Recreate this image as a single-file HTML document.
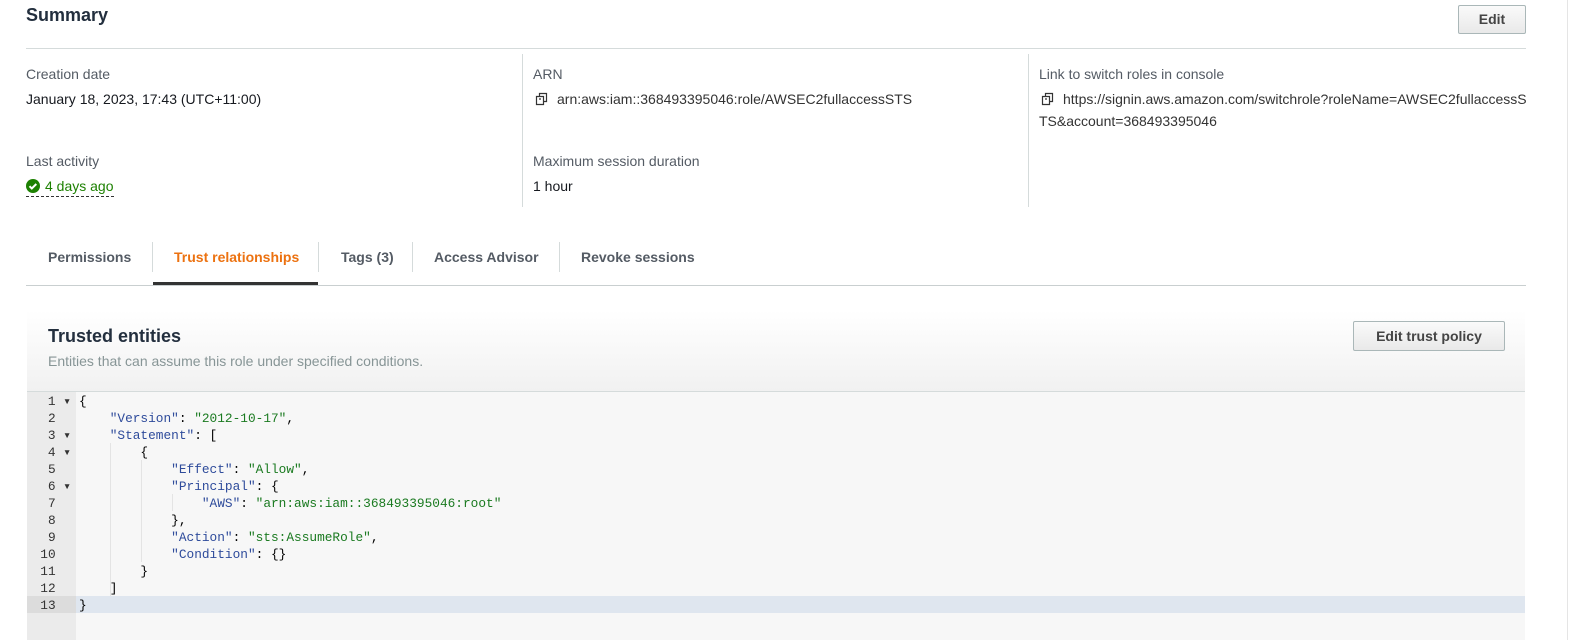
<!DOCTYPE html>
<html><head><meta charset="utf-8"><style>
*{margin:0;padding:0;box-sizing:border-box}
body{width:1571px;height:640px;background:#fff;font-family:"Liberation Sans",Arial,sans-serif;font-size:14px;color:#16191f;position:relative;overflow:hidden}
.a{position:absolute;white-space:nowrap}
.lbl{color:#545b64}
.btn{position:absolute;border:1px solid #aab7b8;border-radius:2px;background:linear-gradient(#fafafa,#e9e9e9);font-weight:bold;color:#444;text-align:center;font-size:14px}
.vl{position:absolute;width:1px;background:#d5dbdb}
.tab{position:absolute;top:249px;font-weight:bold;color:#545b64;font-size:14px}
.mono{font-family:"Liberation Mono","DejaVu Sans Mono",monospace;font-size:12.8px}
.ln{position:absolute;left:27px;width:44px;text-align:right;color:#333}
.cl{position:absolute;left:79px;white-space:pre;color:#000}
.k{color:#2e4b9b}.s{color:#1a7a20}
.ico{display:inline-block;vertical-align:-2px;margin-right:8px}
</style></head><body>
<div class="a" style="left:26px;top:5px;font-size:18px;font-weight:bold;color:#232f3e">Summary</div>
<div class="btn" style="left:1458px;top:5px;width:68px;height:29px;line-height:27px">Edit</div>
<div class="a" style="left:26px;top:48px;width:1500px;height:1px;background:#d5dbdb"></div>
<div class="vl" style="left:522px;top:54px;height:153px"></div>
<div class="vl" style="left:1028px;top:54px;height:153px"></div>
<div class="a lbl" style="left:26px;top:66px">Creation date</div>
<div class="a" style="left:26px;top:91px">January 18, 2023, 17:43 (UTC+11:00)</div>
<div class="a lbl" style="left:26px;top:153px">Last activity</div>
<div class="a" style="left:26px;top:178px;color:#1d8102;border-bottom:1px dashed #333;padding-bottom:2px"><svg width="14" height="14" viewBox="0 0 14 14" style="vertical-align:-2px;margin-right:5px"><circle cx="7" cy="7" r="7" fill="#1d8102"/><path d="M3.5 7.2l2.3 2.3 4.5-4.5" stroke="#fff" stroke-width="2" fill="none"/></svg>4 days ago</div>
<svg width="0" height="0" style="position:absolute"><defs><g id="cp"><path d="M1.5 4.5h7v8h-7z M4.5 4.5v-3h7v8h-3 M4 7h2" stroke="#333" fill="none" stroke-width="1.2"/></g></defs></svg>
<div class="a lbl" style="left:533px;top:66px">ARN</div>
<div class="a" style="left:535px;top:91px;color:#333"><svg class="ico" width="14" height="14" viewBox="0 0 14 14"><use href="#cp"/></svg>arn:aws:iam::368493395046:role/AWSEC2fullaccessSTS</div>
<div class="a lbl" style="left:533px;top:153px">Maximum session duration</div>
<div class="a" style="left:533px;top:178px">1 hour</div>
<div class="a lbl" style="left:1039px;top:66px">Link to switch roles in console</div>
<div class="a" style="left:1041px;top:91px;color:#333"><svg class="ico" width="14" height="14" viewBox="0 0 14 14"><use href="#cp"/></svg>https://signin.aws.amazon.com/switchrole?roleName=AWSEC2fullaccessS</div>
<div class="a" style="left:1039px;top:113px;color:#333">TS&amp;account=368493395046</div>

<div class="vl" style="left:152px;top:242px;height:30px"></div>
<div class="vl" style="left:318px;top:242px;height:30px"></div>
<div class="vl" style="left:412px;top:242px;height:30px"></div>
<div class="vl" style="left:559px;top:242px;height:30px"></div>
<div class="tab" style="left:48px">Permissions</div>
<div class="tab" style="left:174px;color:#ec7211">Trust relationships</div>
<div class="tab" style="left:341px">Tags (3)</div>
<div class="tab" style="left:434px">Access Advisor</div>
<div class="tab" style="left:581px">Revoke sessions</div>
<div class="a" style="left:153px;top:282px;width:165px;height:3px;background:#333"></div>
<div class="a" style="left:26px;top:285px;width:1500px;height:1px;background:#c9cfd0"></div>

<div class="a" style="left:27px;top:310px;width:1498px;height:82px;background:linear-gradient(#fff,#f1f1f1);border-bottom:1px solid #d5dbdb"></div>
<div class="a" style="left:48px;top:326px;font-size:18px;font-weight:bold;color:#232f3e">Trusted entities</div>
<div class="a" style="left:48px;top:353px;color:#879596">Entities that can assume this role under specified conditions.</div>
<div class="btn" style="left:1353px;top:321px;width:152px;height:30px;line-height:28px">Edit trust policy</div>

<div class="a" style="left:27px;top:392px;width:49px;height:248px;background:#ebebeb"></div>
<div class="a" style="left:76px;top:392px;width:1449px;height:248px;background:#f7f7f7"></div>
<div class="a" style="left:27px;top:596px;width:49px;height:17px;background:#dcdcdc"></div>
<div class="a" style="left:76px;top:596px;width:1449px;height:17px;background:#dfe6ef"></div>
<div class="a" style="left:1567px;top:0;width:1px;height:640px;background:#e5e5e5"></div>
<div class="a" style="left:110px;top:443px;width:1px;height:153px;background:#e4e4e4"></div>
<div class="a" style="left:141px;top:460px;width:1px;height:102px;background:#e4e4e4"></div>
<div class="a" style="left:172px;top:494px;width:1px;height:17px;background:#e4e4e4"></div>
<div class="mono" style="position:absolute;left:0;top:2px;width:1571px">
<div class="ln" style="top:392px">1 ▾</div><div class="cl" style="top:392px">{</div>
<div class="ln" style="top:409px">2&nbsp;&nbsp;</div><div class="cl" style="top:409px">    <span class="k">"Version"</span>: <span class="s">"2012-10-17"</span>,</div>
<div class="ln" style="top:426px">3 ▾</div><div class="cl" style="top:426px">    <span class="k">"Statement"</span>: [</div>
<div class="ln" style="top:443px">4 ▾</div><div class="cl" style="top:443px">        {</div>
<div class="ln" style="top:460px">5&nbsp;&nbsp;</div><div class="cl" style="top:460px">            <span class="k">"Effect"</span>: <span class="s">"Allow"</span>,</div>
<div class="ln" style="top:477px">6 ▾</div><div class="cl" style="top:477px">            <span class="k">"Principal"</span>: {</div>
<div class="ln" style="top:494px">7&nbsp;&nbsp;</div><div class="cl" style="top:494px">                <span class="k">"AWS"</span>: <span class="s">"arn:aws:iam::368493395046:root"</span></div>
<div class="ln" style="top:511px">8&nbsp;&nbsp;</div><div class="cl" style="top:511px">            },</div>
<div class="ln" style="top:528px">9&nbsp;&nbsp;</div><div class="cl" style="top:528px">            <span class="k">"Action"</span>: <span class="s">"sts:AssumeRole"</span>,</div>
<div class="ln" style="top:545px">10&nbsp;&nbsp;</div><div class="cl" style="top:545px">            <span class="k">"Condition"</span>: {}</div>
<div class="ln" style="top:562px">11&nbsp;&nbsp;</div><div class="cl" style="top:562px">        }</div>
<div class="ln" style="top:579px">12&nbsp;&nbsp;</div><div class="cl" style="top:579px">    ]</div>
<div class="ln" style="top:596px">13&nbsp;&nbsp;</div><div class="cl" style="top:596px">}</div>
</div>
</body></html>
